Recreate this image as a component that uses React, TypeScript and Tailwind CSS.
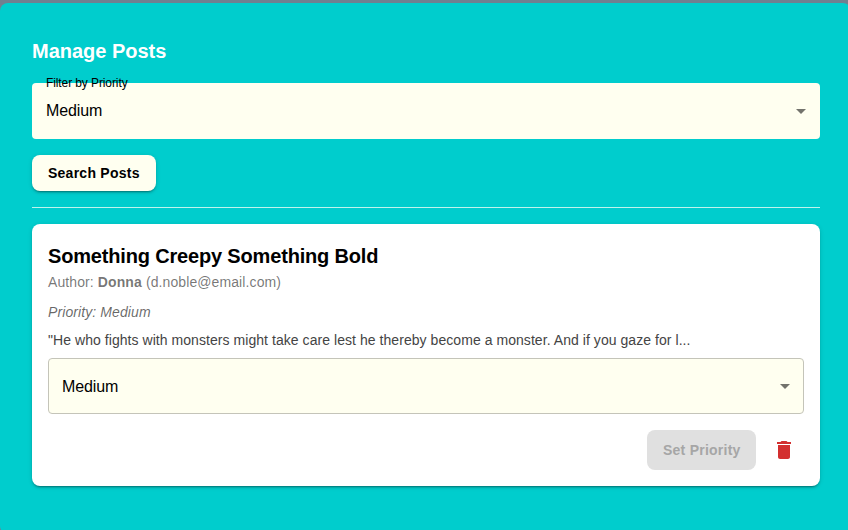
import React from "react";

function Caret() {
  return (
    <svg viewBox="0 0 24 24" className="h-6 w-6 shrink-0 fill-black/55">
      <path d="M7 10l5 5 5-5z" />
    </svg>
  );
}

export default function App() {
  return (
    <div className="h-[530px] w-full overflow-hidden bg-[#708090] pt-[3px] font-['Liberation_Sans',Arial,sans-serif]">
      <main className="h-[531px] w-[851px] rounded-lg bg-[#00cdcd] pt-8 pr-[31px] pl-8">
        <h1 className="text-[20px] leading-8 font-bold tracking-[-0.02px] text-white">Manage Posts</h1>
        <div className="relative mt-4 flex h-14 items-center justify-between rounded bg-[#fffff0] pr-[7px] pl-[14px]">
          <span className="absolute -top-[8px] left-[14px] text-xs leading-[17px] tracking-[-0.1px] text-black">Filter by Priority</span>
          <span className="text-base tracking-[-0.1px] text-black">Medium</span>
          <Caret />
        </div>
        <button className="mt-4 flex h-9 w-[124px] items-center rounded-lg bg-[#fffff0] px-4 text-sm font-bold tracking-[0.25px] whitespace-nowrap text-black shadow-[0_3px_1px_-2px_rgba(0,0,0,0.2),0_2px_2px_0_rgba(0,0,0,0.14),0_1px_5px_0_rgba(0,0,0,0.12)]">
          Search Posts
        </button>
        <hr className="mt-4 border-[#bff3ec]" />
        <article className="mt-4 h-[262px] rounded-lg bg-white p-4 shadow-[0_3px_1px_-2px_rgba(0,0,0,0.2),0_2px_2px_0_rgba(0,0,0,0.14),0_1px_5px_0_rgba(0,0,0,0.12)]">
          <h2 className="text-[20px] leading-8 font-bold tracking-[-0.17px] text-black">Something Creepy Something Bold</h2>
          <p className="text-sm leading-5 tracking-[0.1px] text-black/55">
            Author: <strong>Donna</strong> (d.noble@email.com)
          </p>
          <p className="mt-[10px] text-sm leading-5 tracking-[0.1px] text-black/60 italic">Priority: Medium</p>
          <p className="mt-2 text-sm leading-5 tracking-[0.055px] text-[#444]">
            "He who fights with monsters might take care lest he thereby become a monster. And if you gaze for l...
          </p>
          <div className="mt-2 flex h-14 items-center justify-between rounded border border-[#c4c4b9] bg-[#fffff0] pr-[6px] pl-[13px]">
            <span className="pt-px text-base tracking-[-0.1px] text-black">Medium</span>
            <Caret />
          </div>
          <div className="mt-4 flex items-center justify-end gap-2">
            <button className="h-10 w-[109px] rounded-lg bg-[#e0e0e0] px-4 text-left text-sm font-bold tracking-[0.24px] whitespace-nowrap text-[#a6a6a6]">Set Priority</button>
            <button className="flex h-10 w-10 items-center justify-center">
              <svg viewBox="0 0 24 24" className="h-6 w-6 fill-[#d32f2f]">
                <path d="M6 19c0 1.100.9 2 2 2h8c1.100 0 2-.9 2-2V7H6zM19 4h-3.500l-1-1h-5l-1 1H5v2h14z" />
              </svg>
            </button>
          </div>
        </article>
      </main>
    </div>
  );
}
